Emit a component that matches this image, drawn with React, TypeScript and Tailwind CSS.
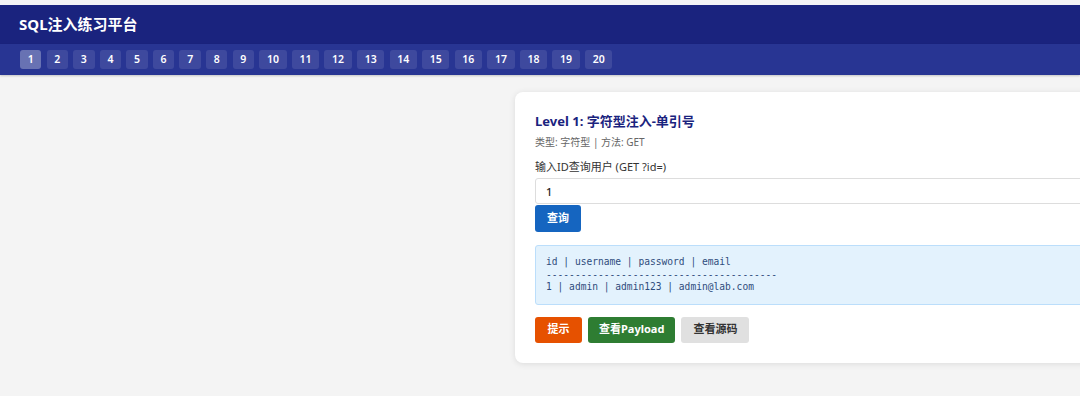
const levels = Array.from({ length: 20 }, (_, i) => i + 1);

const sans = "font-['Segoe_UI','Noto_Sans','Noto_Sans_CJK_SC',sans-serif]";

export default function App() {
  return (
    <div className={`h-[396px] w-[1080px] overflow-hidden bg-[#f4f4f4] ${sans}`}>
      <div className="h-[5px] bg-[#f3f3f5]" />
      <header className="flex h-[39px] items-center bg-[#1a237e] px-[19px]">
        <h1 className="text-[15px] font-bold text-white">SQL注入练习平台</h1>
      </header>
      <nav className="flex h-[31px] items-center gap-[5.2px] bg-[#283593] px-[20px] shadow-[0_1px_2px_rgba(0,0,0,0.2)]">
        {levels.map((n) => (
          <button
            key={n}
            type="button"
            className={
              'h-[19px] rounded-[3px] px-[7.7px] text-[10.5px] font-semibold leading-[19px] text-white ' +
              (n === 1 ? 'bg-white/30' : 'bg-white/10')
            }
          >
            {n}
          </button>
        ))}
      </nav>

      <main className="pl-[515px] pt-[17px]">
        <div className="w-[640px] rounded-[8px] bg-white px-[20px] pb-[20px] pt-[20px] shadow-[0_1px_6px_rgba(0,0,0,0.1)]">
          <h2 className="text-[13px] font-bold leading-[18px] text-[#1a237e]">
            Level 1: 字符型注入-单引号
          </h2>
          <p className="mt-[5px] text-[10px] leading-[14px] text-[#666]">类型: 字符型 | 方法: GET</p>

          <label className="mt-[10px] block text-[11px] leading-[16px] text-[#333]">
            输入ID查询用户 (GET ?id=)
          </label>
          <input
            type="text"
            defaultValue="1"
            className="mt-[3px] block h-[26px] w-full rounded-[3px] border border-[#ddd] px-[10px] text-[11px] font-medium text-[#222] outline-none"
          />
          <button
            type="button"
            className="mt-[1px] h-[27px] rounded-[3px] bg-[#1565c0] px-[12px] text-[11px] font-bold text-white"
          >
            查询
          </button>

          <pre className="mt-[13px] rounded-[3px] border border-[#bbdefb] bg-[#e3f2fd] p-[10px] font-['DejaVu_Sans_Mono','Liberation_Mono',monospace] text-[9.6px] leading-[12.5px] text-[#2f4c7c]">
{`id | username | password | email
----------------------------------------
1 | admin | admin123 | admin@lab.com`}
          </pre>

          <div className="mt-[12px] flex gap-[6px]">
            <button
              type="button"
              className="h-[26px] rounded-[3px] bg-[#e65100] px-[12.5px] text-[11px] font-bold text-white"
            >
              提示
            </button>
            <button
              type="button"
              className="h-[26px] rounded-[3px] bg-[#2e7d32] px-[11px] text-[11px] font-bold text-white"
            >
              查看Payload
            </button>
            <button
              type="button"
              className="h-[26px] rounded-[3px] bg-[#e0e0e0] px-[12px] text-[11px] font-bold text-[#333]"
            >
              查看源码
            </button>
          </div>
        </div>
      </main>
    </div>
  );
}
